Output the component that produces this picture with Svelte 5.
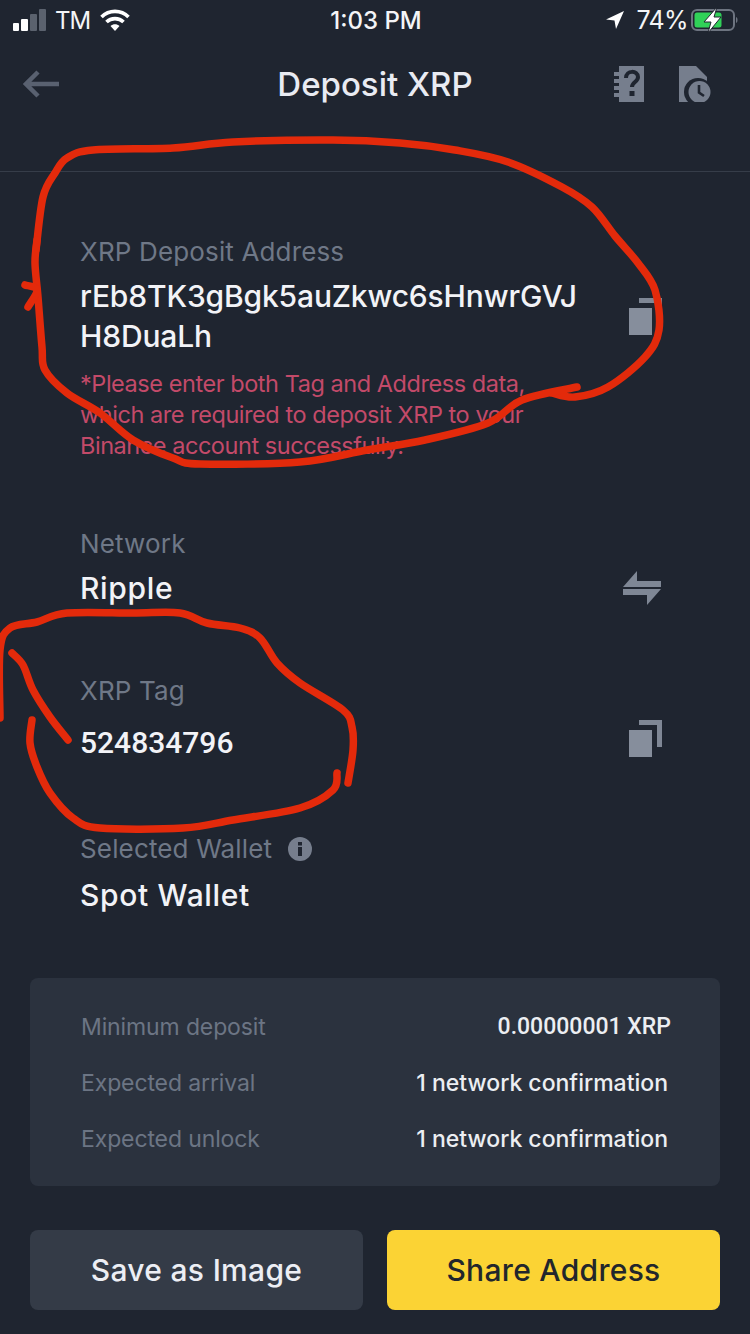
<script>
  // hand-drawn red annotation strokes, as points on the screenshot
  const strokes = [
    [[36,250],[43,197],[55,173],[67,158],[93,150],[173,148],[233,142],[333,140],[400,143],[455,150],[508,162],[562,187],[592,207],[615,236],[638,263],[655,290],[659,330],[645,357],[608,387],[575,397],[552,393]],
    [[577,387],[522,400],[488,423],[425,440],[367,450],[300,462],[200,464],[173,458],[133,440],[100,413],[67,393],[45,370],[42,347],[38,297],[35,263],[37,240]],
    [[25,285],[37,290],[28,307]],
    [[0,718],[0,650],[10,628],[37,622],[67,613],[133,613],[180,613],[207,623],[240,628],[260,638],[277,663],[300,683],[343,710],[352,727],[353,750],[348,783]],
    [[337,773],[333,790],[300,808],[233,820],[183,828],[100,828],[73,818],[50,793],[37,767],[30,743],[32,720]],
    [[12,653],[23,665],[33,690],[50,717],[68,740]]
  ];

  function smooth(pts) {
    let d = `M${pts[0][0]} ${pts[0][1]}`;
    for (let i = 0; i < pts.length - 1; i++) {
      const p0 = pts[i - 1] || pts[i];
      const p1 = pts[i];
      const p2 = pts[i + 1];
      const p3 = pts[i + 2] || p2;
      const c1x = p1[0] + (p2[0] - p0[0]) / 6;
      const c1y = p1[1] + (p2[1] - p0[1]) / 6;
      const c2x = p2[0] - (p3[0] - p1[0]) / 6;
      const c2y = p2[1] - (p3[1] - p1[1]) / 6;
      d += ` C${c1x} ${c1y} ${c2x} ${c2y} ${p2[0]} ${p2[1]}`;
    }
    return d;
  }

  const details = [
    { label: 'Minimum deposit', value: '0.00000001 XRP', numeric: true },
    { label: 'Expected arrival', value: '1 network confirmation' },
    { label: 'Expected unlock', value: '1 network confirmation' }
  ];
</script>

{#snippet copyIcon()}
  <svg class="copy" width="34" height="37" viewBox="0 0 34 37">
    <path d="M10 0h23v27h-5V5H10z" fill="#7f8795" />
    <rect x="0" y="10" width="23" height="27" fill="#868e9c" />
  </svg>
{/snippet}

<div class="screen">
  <div class="status">
    <div class="status-left">
      <svg width="34" height="22" viewBox="0 0 34 22">
        <rect x="0" y="14" width="6" height="8" rx="1" fill="#fff" />
        <rect x="8" y="10" width="7" height="12" rx="1" fill="#fff" />
        <rect x="17" y="5" width="7" height="17" rx="1" fill="#5b626e" />
        <rect x="26" y="0" width="7" height="22" rx="1" fill="#5b626e" />
      </svg>
      <span class="carrier">TM</span>
      <svg class="wifi" width="30" height="22" viewBox="0 0 30 22">
        <path d="M1.5 8 C9 0.5 21 0.5 28.5 8" fill="none" stroke="#fff" stroke-width="3.6" />
        <path d="M6.5 13 C11 8.5 19 8.5 23.5 13" fill="none" stroke="#fff" stroke-width="3.6" />
        <path d="M10.5 17 C13 14.5 17 14.5 19.5 17 L15 22z" fill="#fff" />
      </svg>
    </div>
    <div class="clock">1:03 PM</div>
    <div class="status-right">
      <svg class="location" width="18" height="18" viewBox="0 0 18 18"><path d="M18 0 L0 8.5 L8.5 9.5 L10 18z" fill="#fff" /></svg>
      <span class="percent">74%</span>
      <svg class="battery" width="48" height="26" viewBox="0 0 48 26">
        <rect x="1" y="3" width="42" height="20" rx="5" fill="none" stroke="#6d7480" stroke-width="2" />
        <rect x="3.500" y="5.500" width="27" height="15" rx="2.500" fill="#30d158" />
        <path d="M45 10c2 .5 2 5.500 0 6z" fill="#6d7480" />
        <path d="M26 0 L13 15 H20 L17 26 L30 10 H23z" fill="#fff" stroke="#1f2530" stroke-width="1" />
      </svg>
    </div>
  </div>

  <header class="nav">
    <svg class="back" width="36" height="28" viewBox="0 0 36 28">
      <path d="M36 14H4M15 2 3 14l12 12" fill="none" stroke="#596170" stroke-width="4.500" />
    </svg>
    <h1>Deposit XRP</h1>
    <div class="nav-icons">
      <svg width="30" height="36" viewBox="0 0 30 36">
        <path d="M5 0h25v36H5v-5H0v-4h5v-3H0v-4h5v-3H0v-4h5v-3H0V6h5z" fill="#767e8d" />
        <path d="M12 12c0-8 12-8 12-1 0 5-6 5-6 10" fill="none" stroke="#1f2530" stroke-width="4" />
        <rect x="15.500" y="25" width="5" height="5" fill="#1f2530" />
      </svg>
      <svg width="32" height="36" viewBox="0 0 32 36">
        <path d="M0 0h17l11 11v25H0z" fill="#767e8d" />
        <circle cx="19" cy="26" r="14" fill="#1f2530" />
        <circle cx="20.500" cy="26" r="11" fill="#767e8d" />
        <path d="M20 19v7.500l5 3.500" fill="none" stroke="#1f2530" stroke-width="2.600" />
      </svg>
    </div>
  </header>

  <main class="content">
    <section class="address">
      <div class="label">XRP Deposit Address</div>
      <div class="value-row">
        <div class="value wrap">rEb8TK3gBgk5auZkwc6sHnwrGVJH8DuaLh</div>
        {@render copyIcon()}
      </div>
      <p class="warning">*Please enter both Tag and Address data, which are required to deposit XRP to your Binance account successfully.</p>
    </section>

    <section class="network">
      <div class="label">Network</div>
      <div class="value-row">
        <div class="value loose">Ripple</div>
        <svg class="swap" width="38" height="34" viewBox="0 0 38 34">
          <path d="M14 0v10h24v6H0z" fill="#7f8795" />
          <path d="M0 18h38L24 34V24H0z" fill="#7f8795" />
        </svg>
      </div>
    </section>

    <section class="tag">
      <div class="label">XRP Tag</div>
      <div class="value-row">
        <div class="value numeric">524834796</div>
        {@render copyIcon()}
      </div>
    </section>

    <section class="wallet">
      <div class="label with-icon">
        Selected Wallet
        <svg width="24" height="24" viewBox="0 0 24 24">
          <circle cx="12" cy="12" r="12" fill="#767e8d" />
          <rect x="10" y="10" width="4" height="9" fill="#1f2530" />
          <rect x="10" y="5" width="4" height="3.500" fill="#1f2530" />
        </svg>
      </div>
      <div class="value loose">Spot Wallet</div>
    </section>

    <div class="card">
      {#each details as row}
        <div class="row">
          <span class="row-label">{row.label}</span>
          <span class="row-value" class:numeric={row.numeric}>{row.value}</span>
        </div>
      {/each}
    </div>

    <div class="actions">
      <button class="btn secondary">Save as Image</button>
      <button class="btn primary">Share Address</button>
    </div>
  </main>

  <svg class="scribble" width="750" height="1334" viewBox="0 0 750 1334">
    {#each strokes as pts}
      <path d={smooth(pts)} fill="none" stroke="#e32a0b" stroke-width="7.500" stroke-linecap="round" stroke-linejoin="round" />
    {/each}
  </svg>
</div>

<style>
  :global(body) {
    background: #1f2530;
  }

  .screen {
    position: relative;
    width: 750px;
    height: 1334px;
    overflow: hidden;
    background: #1f2530;
    color: #eaecef;
    font-family: Inter, "Noto Sans", sans-serif;
  }

  .status {
    display: grid;
    grid-template-columns: 1fr auto 1fr;
    align-items: center;
    height: 40px;
    padding: 0 11px 0 13px;
    font-size: 25px;
    color: #f4f5f7;
  }

  .status-left,
  .status-right {
    display: flex;
    align-items: center;
  }

  .status-left {
    gap: 8px;
  }

  .carrier {
    font-size: 24px;
    letter-spacing: -1px;
  }

  .status-left .wifi {
    margin-left: 2px;
  }

  .status-right {
    justify-content: flex-end;
    gap: 3px;
  }

  .location {
    margin-right: 9px;
  }

  .percent {
    letter-spacing: -0.6px;
  }

  .clock {
    font-weight: 500;
    font-size: 24px;
  }

  .nav {
    display: flex;
    align-items: center;
    justify-content: space-between;
    height: 132px;
    padding: 0 39px 44px 23px;
    box-sizing: border-box;
    border-bottom: 1px solid #363d49;
    position: relative;
  }

  .nav h1 {
    position: absolute;
    left: 0;
    right: 0;
    top: 22px;
    margin: 0;
    text-align: center;
    font-size: 33px;
    line-height: 44px;
    font-weight: 500;
    color: #e9ebf2;
  }

  .nav-icons {
    display: flex;
    gap: 35px;
  }

  .content {
    padding: 62px 30px 0;
  }

  section {
    padding: 0 57px 0 50px;
  }

  .label {
    font-size: 26px;
    line-height: 36px;
    letter-spacing: 0.15px;
    color: #6f7887;
  }

  .with-icon {
    display: flex;
    align-items: center;
    gap: 16px;
  }

  .value {
    font-size: 30px;
    line-height: 40px;
    font-weight: 500;
    color: #f2f3f7;
  }

  .loose {
    letter-spacing: 0.65px;
  }

  .numeric {
    font-family: Roboto, sans-serif;
  }

  .value-row {
    display: flex;
    align-items: center;
    justify-content: space-between;
    margin-top: 6px;
  }

  .wrap {
    width: 505px;
    letter-spacing: -0.15px;
    word-break: break-all;
  }

  .warning {
    margin: 12px 0 0;
    width: 452px;
    font-size: 23.500px;
    line-height: 31px;
    letter-spacing: -0.45px;
    color: #c34a69;
  }

  .network {
    margin-top: 65px;
  }

  .swap {
    margin-right: 2px;
  }

  .tag {
    margin-top: 65px;
  }

  .tag .value-row {
    margin-top: 14px;
  }

  .tag .copy {
    margin-top: -10px;
  }

  .wallet {
    margin-top: 68px;
  }

  .wallet .value {
    margin-top: 8px;
  }

  .card {
    display: flex;
    flex-direction: column;
    gap: 16px;
    height: 208px;
    margin-top: 63px;
    padding: 29px 49px 0 51px;
    box-sizing: border-box;
    border-radius: 8px;
    background: #2b323e;
  }

  .row {
    display: flex;
    justify-content: space-between;
    font-size: 23px;
    line-height: 40px;
  }

  .row-label {
    letter-spacing: -0.12px;
    color: #6c7584;
  }

  .row-value {
    margin-right: 3px;
    color: #eceef2;
    font-weight: 500;
  }

  .row-value.numeric {
    margin-right: 0;
  }

  .actions {
    display: flex;
    gap: 24px;
    margin-top: 44px;
  }

  .btn {
    flex: 1;
    height: 80px;
    border: 0;
    border-radius: 8px;
    font-family: inherit;
    font-size: 30px;
    font-weight: 500;
    letter-spacing: 0.3px;
  }

  .secondary {
    background: #343b47;
    color: #eceef4;
  }

  .primary {
    background: #fbd334;
    color: #22262c;
  }

  .scribble {
    position: absolute;
    inset: 0;
    pointer-events: none;
  }
</style>
